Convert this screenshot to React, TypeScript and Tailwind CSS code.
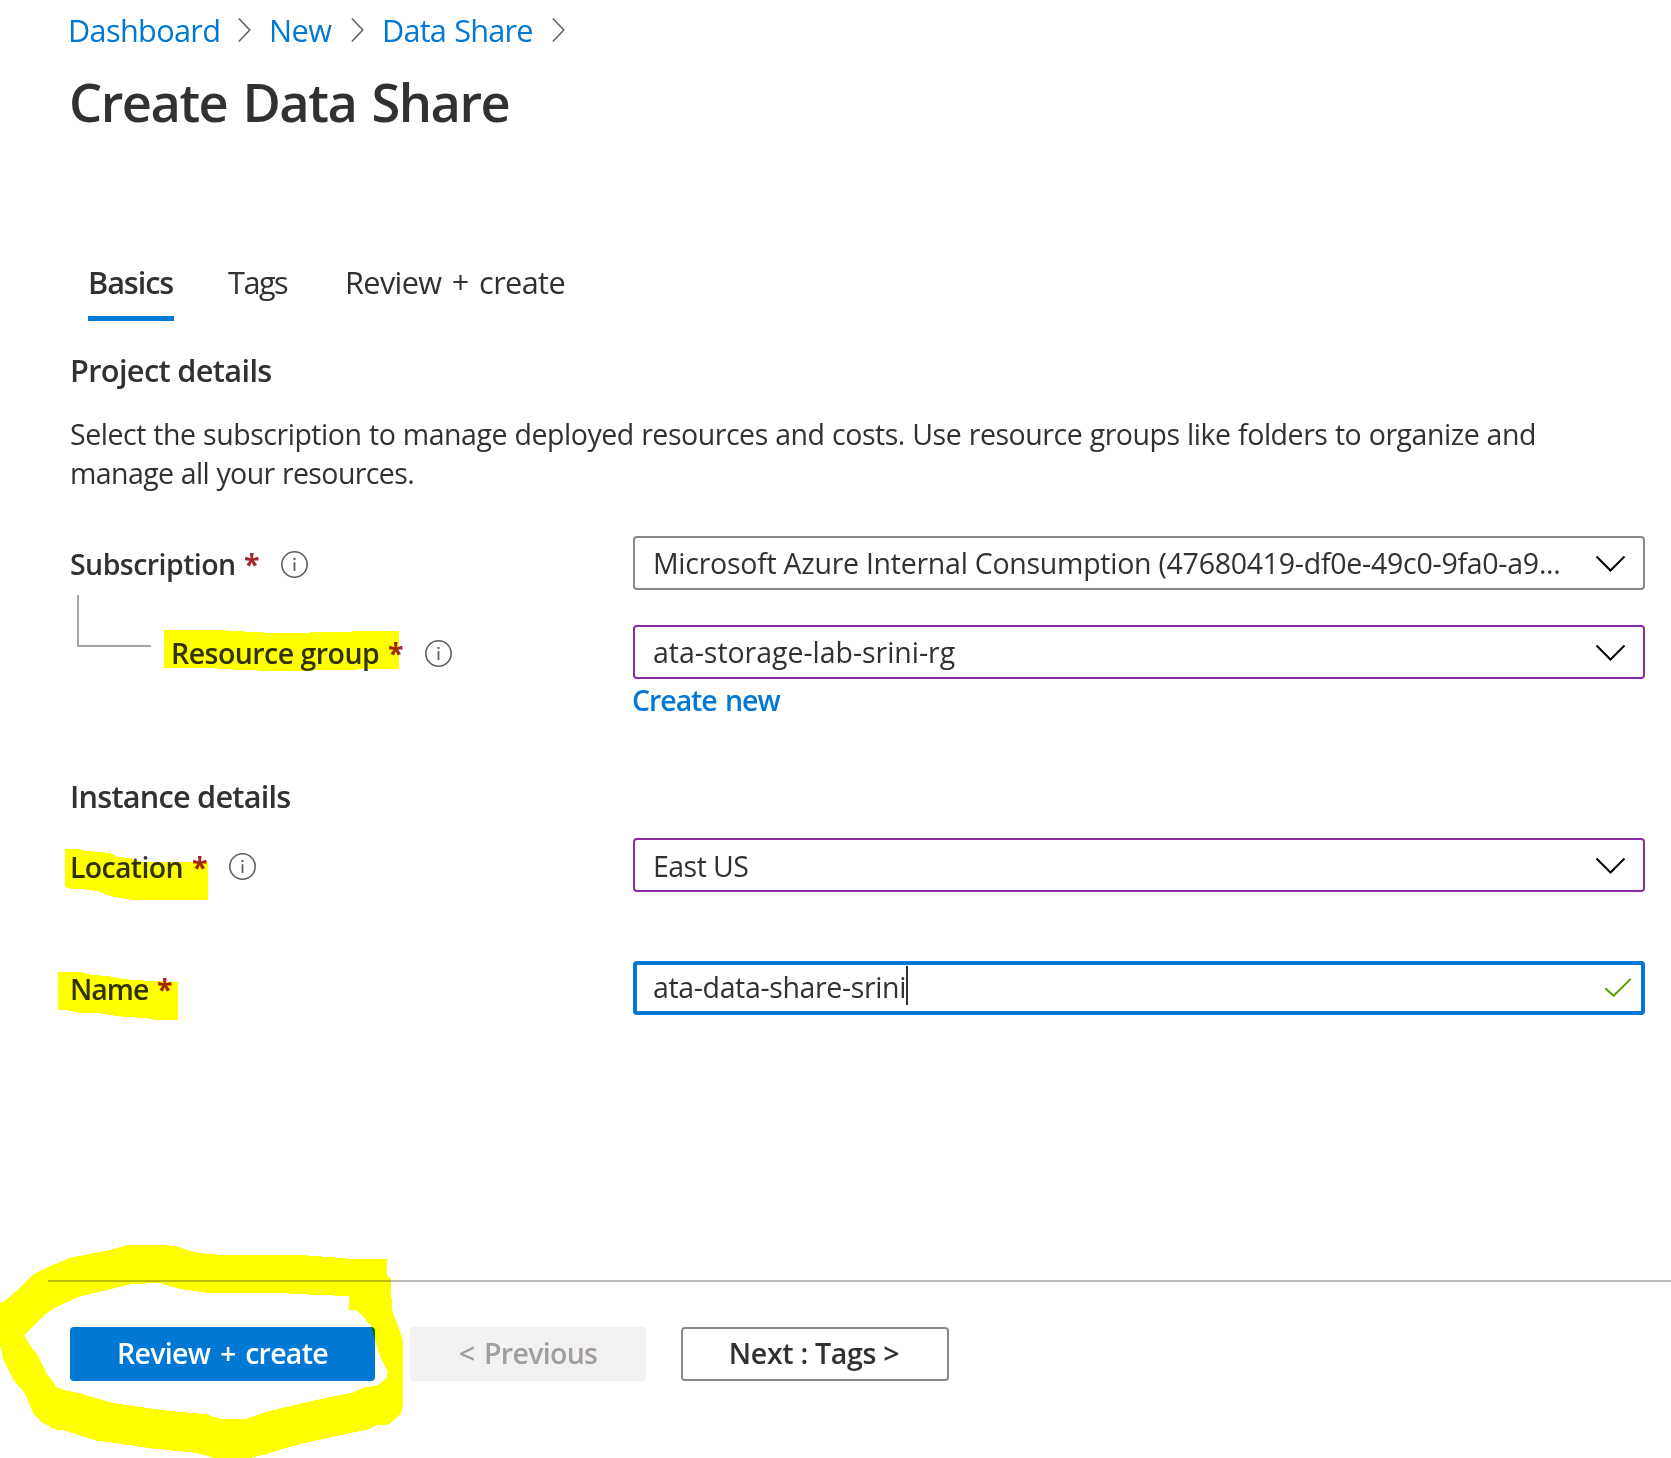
import type { ReactNode } from 'react';

function BreadcrumbChevron() {
  return (
    <svg width="13" height="24" viewBox="0 0 13 24" fill="none" stroke="#605e5c" strokeWidth="1.5" className="mt-[8px] shrink-0">
      <path d="M0.8 0.6 11.8 12 0.8 23.4" />
    </svg>
  );
}

function SelectChevron() {
  return (
    <svg width="31" height="18" viewBox="0 0 31 18" fill="none" stroke="#000" strokeWidth="2" className="mt-[2px] mr-[17px] shrink-0">
      <path d="M1.5 1.5 15.5 15.5 29.5 1.5" />
    </svg>
  );
}

function InfoIcon() {
  return (
    <svg width="28" height="28" viewBox="0 0 28 28" fill="none" stroke="#605e5c" strokeWidth="1.6" className="mt-[15px] shrink-0">
      <circle cx="13.5" cy="13.5" r="12.7" />
      <path d="M13.5 11.2V20" strokeWidth="1.8" />
      <path d="M13.5 7V9.1" strokeWidth="2" />
    </svg>
  );
}

function Star() {
  return <span className="w-[37px] text-[28.5px] font-bold text-[#a4262c]">*</span>;
}

function SelectBox({ border, children }: { border: string; children: ReactNode }) {
  return (
    <div className={`flex h-[54px] w-[1012px] items-center justify-between rounded-[4px] border-2 pl-[18px] ${border}`}>
      {children}
      <SelectChevron />
    </div>
  );
}

function Highlights() {
  return (
    <svg
      width="1671"
      height="1458"
      viewBox="0 0 1671 1458"
      fill="#ffff00"
      shapeRendering="crispEdges"
      className="pointer-events-none absolute top-0 left-0 mix-blend-multiply"
    >
      <polygon points="164,630 227,630 227,631 244,631 244,632 264,632 264,633 310,633 310,632 352,632 352,631 399,631 399,669 358,669 358,670 314,670 314,671 258,671 258,670 233,670 233,669 217,669 217,668 164,668" />
      <polygon points="65,849 79,849 84,850.5 110,853 118,857 130,858 143,862 208,862 208,900 134,900 120,898 107,895 98,891 80,889 70,888.5 65,887" />
      <polygon points="58,972 81,972 92,975 107,976 123,979 148,981 178,982 178,1020 155,1020 145,1018 125,1017 110,1015 98,1013 80,1013 67,1010 58,1010" />
      <path
        transform="translate(0 1220) scale(0.33333)"
        fillRule="evenodd"
        d="M0 248 12 246 20 238 60 203 95 168 120 152 160 135 210 113 270 102 330 90 380 76 500 75 530 79 560 90 600 99 680 106 850 106 915 106 1000 112 1060 117 1161 118 1161 168 1172 174 1176 270 1195 320 1208 360 1209 555 1202 582 1168 613 1128 616 1105 628 1000 650 920 668 850 686 800 702 755 713 640 713 590 699 450 685 360 671 290 662 195 632 165 628 125 607 100 580 75 520 40 480 10 420 0 370Z
           M72 345 140 280 165 263 240 229 300 215 400 191 480 190 540 207 620 218 860 220 950 225 1047 228 1047 269 1070 270 1112 315 1137 400 1163 455 1160 475 1130 497 1090 503 1060 517 940 542 800 575 740 596 665 598 620 583 490 571 400 558 330 547 240 520 195 511 168 500 160 485 140 462 115 408 90 376Z"
      />
    </svg>
  );
}

export default function App() {
  return (
    <main className="relative isolate flex h-[1458px] w-[1671px] flex-col overflow-hidden bg-white font-['Open_Sans',sans-serif] text-[28.5px] whitespace-nowrap text-[#323130]">
      <nav className="mt-[10px] flex h-[40px] pl-[68px] text-[30.7px] leading-[40px] text-[#0078d4]">
        <a className="w-[170px] tracking-[-0.68px]">Dashboard</a>
        <BreadcrumbChevron />
        <a className="ml-[18px] w-[82px] tracking-[-0.5px]">New</a>
        <BreadcrumbChevron />
        <a className="ml-[18px] w-[170px] tracking-[-0.8px] [word-spacing:1px]">Data Share</a>
        <BreadcrumbChevron />
      </nav>

      <h1 className="mt-[17px] h-[70px] pl-[69px] text-[52.4px] leading-[70px] font-semibold tracking-[-1.5px] [word-spacing:3px]">Create Data Share</h1>

      <div className="mt-[125px] flex h-[59px] pl-[88px] text-[30.7px] leading-[40px]">
        <div className="w-[86px] border-b-[5px] border-[#0078d4] font-semibold tracking-[-1.08px]">Basics</div>
        <div className="ml-[54px] w-[117px] tracking-[-1.5px]">Tags</div>
        <div className="tracking-[-0.63px] [word-spacing:3px]">Review + create</div>
      </div>

      <h2 className="mt-[29px] h-[40px] pl-[70px] text-[30.7px] leading-[40px] font-semibold tracking-[-0.64px]">Project details</h2>
      <p className="mt-[25px] pl-[70px] leading-[39px]">
        <span className="tracking-[-0.46px] [word-spacing:0.5px]">
          Select the subscription to manage deployed resources and costs. Use resource groups like folders to organize and
        </span>
        <br />
        <span className="tracking-[-0.6px] [word-spacing:0.5px]">manage all your resources.</span>
      </p>

      <div className="mt-[43px] flex h-[54px] pl-[70px] leading-[56px]">
        <div className="flex w-[563px]">
          <span className="w-[174px] font-semibold tracking-[-0.55px]">Subscription</span>
          <Star />
          <InfoIcon />
        </div>
        <SelectBox border="border-[#8a8886]">
          <span className="leading-[50px] tracking-[-0.26px]">Microsoft Azure Internal Consumption (47680419-df0e-49c0-9fa0-a9...</span>
        </SelectBox>
      </div>

      <div className="flex h-[131px] pl-[77px]">
        <div className="mt-[5px] h-[52px] w-[74px] shrink-0 border-b-2 border-l-2 border-[#a6a6a6]" />
        <div className="mt-[35px] ml-[20px] flex w-[462px] shrink-0 leading-[56px]">
          <span className="w-[217px] font-semibold tracking-[-0.53px]">Resource group</span>
          <Star />
          <InfoIcon />
        </div>
        <div className="mt-[35px]">
          <SelectBox border="border-[#8a2da5]">
            <span className="leading-[50px] tracking-[-0.04px]">ata-storage-lab-srini-rg</span>
          </SelectBox>
          <a className="-ml-px block leading-[42px] font-semibold tracking-[-1.05px] [word-spacing:2px] text-[#0078d4]">Create new</a>
        </div>
      </div>

      <h2 className="mt-[55px] h-[40px] pl-[70px] text-[30.7px] leading-[40px] font-semibold tracking-[-0.78px]">Instance details</h2>

      <div className="mt-[22px] flex h-[54px] pl-[70px] leading-[58px]">
        <div className="flex w-[563px]">
          <span className="w-[122px] font-semibold tracking-[-0.68px]">Location</span>
          <Star />
          <InfoIcon />
        </div>
        <SelectBox border="border-[#8a2da5]">
          <span className="pt-[2px] leading-[50px] tracking-[-0.54px]">East US</span>
        </SelectBox>
      </div>

      <div className="mt-[69px] flex h-[54px] pl-[70px] leading-[56px]">
        <div className="flex w-[563px]">
          <span className="w-[87px] font-semibold tracking-[-1px]">Name</span>
          <Star />
        </div>
        <div className="flex h-[54px] w-[1012px] items-start rounded-[4px] border-4 border-[#0078d4] pl-[16px]">
          <span className="leading-[44px] tracking-[-0.36px]">ata-data-share-srini</span>
          <span className="mt-[1px] h-[39px] w-[2px] bg-[#323130]" />
          <svg width="28" height="20" viewBox="0 0 28 20" fill="none" stroke="#57a300" strokeWidth="2" className="mt-[13px] mr-[9px] ml-auto">
            <path d="M1.3 10.2 9.6 17.8 26.8 0.9" />
          </svg>
        </div>
      </div>

      <div className="mt-[265px] ml-[48px] h-[2px] bg-[#bdbdbd]" />

      <div className="mt-[45px] flex pl-[70px] text-center leading-[52px] font-semibold">
        <button className="h-[54px] w-[305px] rounded-[4px] bg-[#0078d4] pb-[2px] tracking-[-0.72px] [word-spacing:3px] text-white">Review + create</button>
        <button className="ml-[35px] h-[54px] w-[236px] rounded-[4px] bg-[#f3f2f1] pb-[2px] tracking-[-0.7px] [word-spacing:3px] text-[#a19f9d]">&lt; Previous</button>
        <button className="ml-[35px] h-[54px] w-[268px] rounded-[4px] border-2 border-[#8a8886] pr-[2px] pb-[2px] leading-[48px] tracking-[-0.3px]">Next : Tags &gt;</button>
      </div>

      <Highlights />
    </main>
  );
}
